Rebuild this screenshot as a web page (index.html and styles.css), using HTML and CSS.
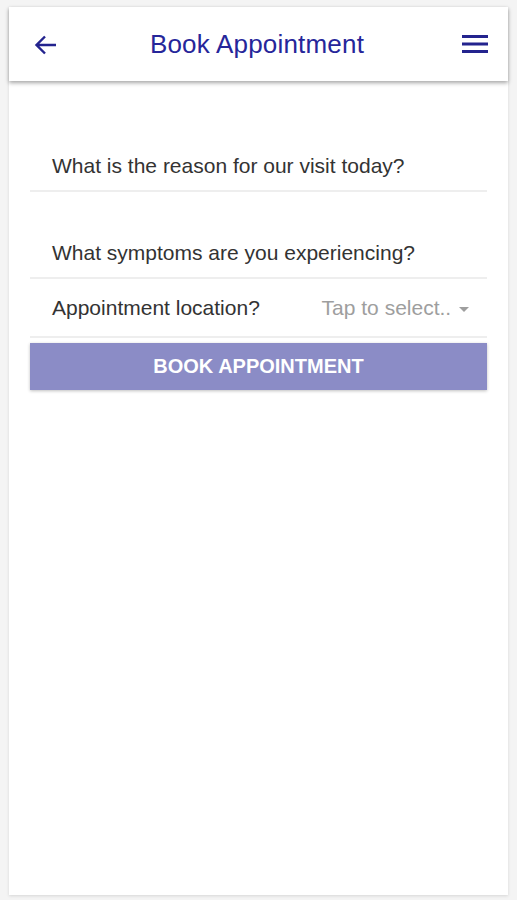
FILE: index.html
```html
<!DOCTYPE html>
<html>
<head>
<title>Book Appointment</title>
<link rel="stylesheet" href="styles.css">
</head>
<body>
<div class="screen">
    <!-- Header -->
    <div class="header">
        <a class="icon back" href="#">
            <svg width="24" height="22" viewBox="0 0 24 22"><path d="M22 11H3M11 2.5L2.5 11 11 19.5" fill="none" stroke="#23238e" stroke-width="2.4"/></svg>
        </a>
        <div class="title">Book Appointment</div>
        <a class="icon menu" href="#">
            <svg width="26" height="18" viewBox="0 0 26 18"><path d="M0 1.5h26M0 9h26M0 16.5h26" fill="none" stroke="#23238e" stroke-width="3"/></svg>
        </a>
    </div>

    <!-- Form -->
    <div class="form">
        <div class="field">What is the reason for our visit today?</div>
        <div class="field">What symptoms are you experiencing?</div>
        <div class="field select">
            <span>Appointment location?</span>
            <span class="placeholder">Tap to select.. <span class="caret"></span></span>
        </div>
        <div class="btn">BOOK APPOINTMENT</div>
    </div>
</div>
</body>
</html>
```

FILE: styles.css
```css
body {
    font-family: "Liberation Sans", Arial, sans-serif;
    background: #f4f4f4;
    color: #333;
    margin: 0px;
    padding: 7px 9px 5px;
}
a {
    text-decoration: none;
}
.screen {
    background: white;
    height: 888px;
    box-shadow: 0 1px 3px rgba(0, 0, 0, 0.12);
}
.header {
    display: flex;
    align-items: center;
    justify-content: space-between;
    height: 74px;
    padding: 0 20px 0 25px;
    box-shadow: 0 2px 4px rgba(0, 0, 0, 0.35);
    position: relative;
}
.icon {
    display: flex;
}
.icon svg {
    display: block;
}
.back {
    margin-top: 2px;
}
.menu {
    margin-top: -1px;
}
.title {
    color: #26269a;
    font-size: 26px;
    letter-spacing: 0.2px;
    margin-right: 6px;
}
.form {
    padding: 62px 21px 0;
}
.field {
    font-size: 21px;
    color: #333;
    padding: 0 22px;
    border-bottom: 2px solid #eeeeee;
    height: 47px;
    line-height: 46px;
    margin-top: 38px;
}
.field:first-child {
    margin-top: 0px;
}
.field.select {
    display: flex;
    justify-content: space-between;
    margin-top: 0px;
    height: 57px;
    line-height: 58px;
    padding-right: 18px;
}
.placeholder {
    color: #9e9e9e;
}
.caret {
    display: inline-block;
    width: 0;
    height: 0;
    margin-left: 2px;
    vertical-align: middle;
    border-left: 5px solid transparent;
    border-right: 5px solid transparent;
    border-top: 5px solid #9e9e9e;
}
.btn {
    margin-top: 5px;
    height: 47px;
    line-height: 46px;
    background: #8b8cc6;
    color: white;
    font-weight: bold;
    font-size: 20px;
    text-align: center;
    box-shadow: 0 1px 3px rgba(0, 0, 0, 0.25);
}
```
